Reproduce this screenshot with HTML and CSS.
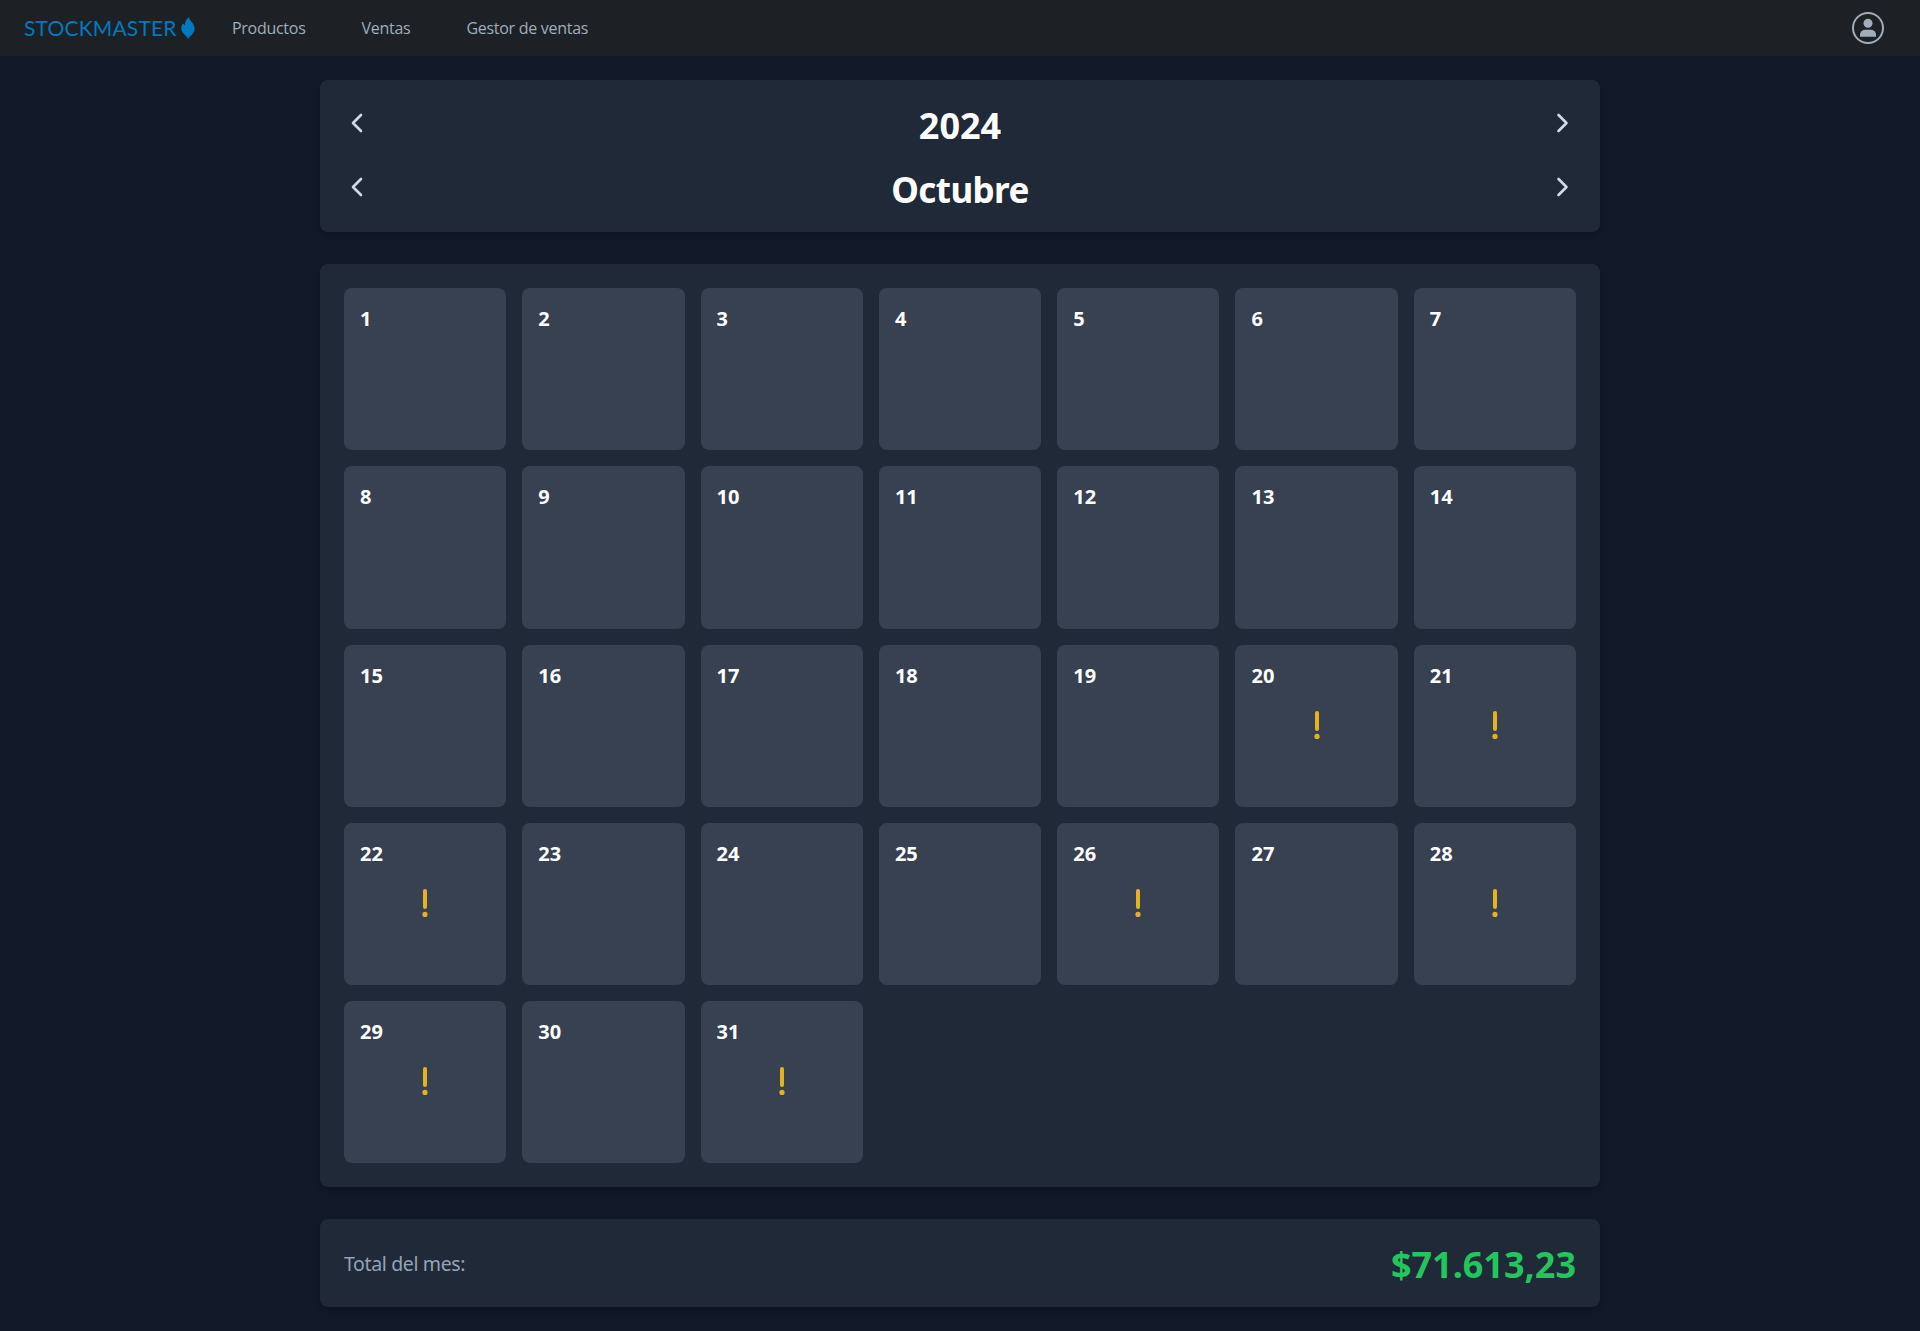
FILE: index.html
```html
<!DOCTYPE html>
<html lang="es">
<head>
<meta charset="utf-8">
<title>StockMaster</title>
<link rel="stylesheet" href="styles.css">
</head>
<body>
<header class="navbar">
  <a class="brand"><span class="brand-name">STOCKMASTER</span><svg class="brand-mark" viewBox="0 0 14 22"><path d="M8 0C7.800 3.500 13.600 6 13.600 11.500C13.600 16.500 9.500 18.500 7 22C6 18.500 0.300 16.500 0.300 11.500C0.300 9 1.200 7.500 2 6.500L4 8.200C3.500 5 5 2.500 8 0Z"/></svg></a>
  <nav class="menu"><a class="products">Productos</a><a class="sales">Ventas</a><a class="manager">Gestor de ventas</a></nav>
  <svg class="user" viewBox="0 0 32 32"><circle cx="16" cy="16" r="15" fill="none" stroke="currentColor" stroke-width="2"/><circle cx="16" cy="11.300" r="4.500" fill="currentColor"/><path d="M8 24.800V23C8 19.500 10.500 17.700 14 17.700H18C21.500 17.700 24 19.500 24 23V24.800Z" fill="currentColor"/></svg>
</header>
<main class="page">
  <section class="card period">
    <div class="period-row"><svg class="chevron" viewBox="0 0 24 24"><path d="M17 5L9 13L17 21"/></svg><h1>2024</h1><svg class="chevron" viewBox="0 0 24 24"><path d="M6.500 5L14.500 13L6.500 21"/></svg></div>
    <div class="period-row"><svg class="chevron" viewBox="0 0 24 24"><path d="M17 5L9 13L17 21"/></svg><h1 class="month">Octubre</h1><svg class="chevron" viewBox="0 0 24 24"><path d="M6.500 5L14.500 13L6.500 21"/></svg></div>
  </section>
  <section class="card calendar" id="calendar"></section>
  <section class="card total"><span class="total-label">Total del mes:</span><strong class="amount">$71.613,23</strong></section>
</main>
<script src="calendar.js"></script>
</body>
</html>
```
FILE: styles.css
```css
* { box-sizing: border-box; }
body { margin: 0; min-height: 1331px; background: #111827; color: #fff; font-family: "Noto Sans", "Open Sans", sans-serif; }
.navbar { height: 56px; padding: 0 36px 0 24px; display: flex; align-items: center; background: #1d2125; color: #9fadbc; }
.brand { display: flex; align-items: center; color: #0079bf; width: 208px; }
.brand-name { width: 157px; font: 400 21px/28px Lato, sans-serif; letter-spacing: 0.18px; white-space: nowrap; }
.brand-mark { width: 14px; height: 22px; fill: #0079bf; }
.menu { flex: 1; display: flex; gap: 56px; font: 16px/24px "Open Sans", sans-serif; white-space: nowrap; padding-bottom: 1px; }
.products, .sales, .manager { letter-spacing: -0.28px; }
.user { width: 32px; height: 32px; }
.page { width: 1280px; margin: 24px auto 0; display: flex; flex-direction: column; gap: 32px; }
.card { padding: 24px; border-radius: 8px; background: #1f2937; box-shadow: 0 4px 6px -1px rgba(0, 0, 0, .1), 0 2px 4px -2px rgba(0, 0, 0, .1); }
.period { display: flex; flex-direction: column; gap: 24px; }
.period-row { height: 40px; display: flex; justify-content: space-between; }
h1 { margin: 0; font-size: 36px; line-height: 44px; font-weight: 700; }
.month { font-size: 35px; letter-spacing: -0.6px; }
.chevron { width: 24px; height: 24px; margin-top: 6px; fill: none; stroke: #d1d9e4; stroke-width: 2.6; stroke-linecap: round; stroke-linejoin: round; }
.calendar { display: grid; grid-template-columns: repeat(7, 1fr); gap: 16px; }
.day { aspect-ratio: 1; padding: 16px; border-radius: 8px; background: #374151; display: flex; flex-direction: column; font-size: 20px; line-height: 30px; font-weight: 700; }
.alert { width: 6px; height: 28px; margin: 20px auto 0; fill: #e5b322; }
.total { height: 88px; display: flex; align-items: center; justify-content: space-between; }
.total-label { color: #94a3b8; font-size: 19.500px; line-height: 28px; letter-spacing: -0.36px; padding-top: 2px; }
.amount { color: #22c55e; font-size: 36px; line-height: 40px; padding-top: 4px; }
```
FILE: calendar.js
```javascript
const alerts = new Set([20, 21, 22, 26, 28, 29, 31]);
const mark = '<svg class="alert" viewBox="0 0 6 28"><rect x="1" y="0" width="4" height="20" rx="2"/><circle cx="3" cy="25.400" r="2.600"/></svg>';
const calendar = document.getElementById("calendar");
for (let day = 1; day <= 31; day++) {
  calendar.insertAdjacentHTML("beforeend", `<div class="day"><span>${day}</span>${alerts.has(day) ? mark : ""}</div>`);
}
```
